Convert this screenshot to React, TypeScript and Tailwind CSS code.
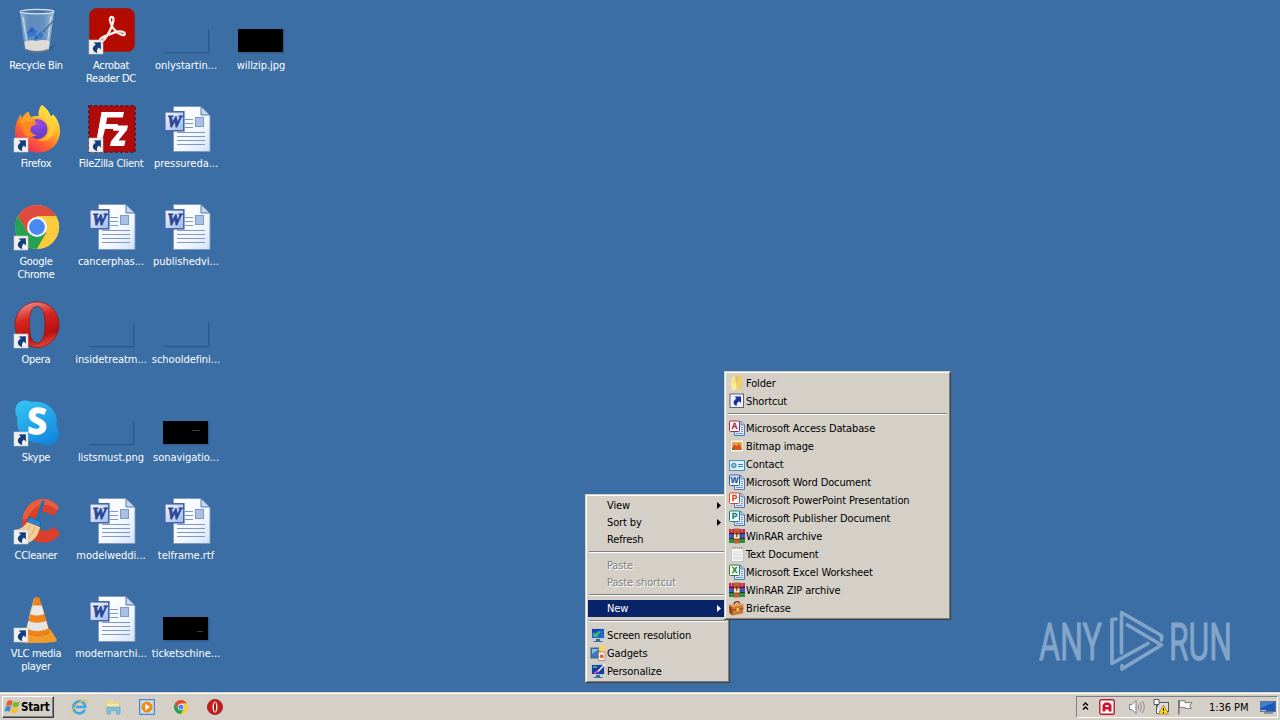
import type { ReactNode } from "react";
import clsx from "clsx";

// Small arrow badge in the bottom-left corner of shortcuts
function ShortcutBadge() {
  return (
    <g>
      <rect x="2" y="33" width="14" height="14" fill="#f1f0ee" stroke="#c9c6c2" strokeWidth="0.6" />
      <path d="M6.6 35.6L13.8 35.2L14 42.4L11.8 40.4C10 42 9.6 43.6 10.3 46.2C6 45 3.6 41 8.8 37.6Z" fill="#123f7c" />
    </g>
  );
}

function Icon48({ children, shortcut = false }: { children: ReactNode; shortcut?: boolean }) {
  return (
    <svg width="49" height="49" viewBox="0 0 49 49" className="block overflow-visible" aria-hidden>
      {children}
      {shortcut && <ShortcutBadge />}
    </svg>
  );
}

function RecycleBin() {
  return (
    <Icon48>
      <defs>
        <linearGradient id="bin" x1="0" x2="1">
          <stop offset="0" stopColor="#a9c3dc" />
          <stop offset="0.25" stopColor="#6592c4" />
          <stop offset="0.7" stopColor="#7099c6" />
          <stop offset="1" stopColor="#c4d3e2" />
        </linearGradient>
      </defs>
      <path d="M34 42L44 36L39 46Z" fill="#2f5c91" opacity="0.6" />
      <path d="M8 5L13 43Q25 47 37 43L42 5Q25 1 8 5Z" fill="url(#bin)" opacity="0.8" />
      <path d="M12.3 35Q18 32 24 34Q31 32 37.8 34.5L36.7 42Q25 46 13.6 42Z" fill="#dedbd4" />
      <path d="M13.4 42Q25 47 36.8 42L36.4 44.5Q25 48 13.8 44.5Z" fill="#5d7284" />
      <ellipse cx="25" cy="4.6" rx="17" ry="2.2" fill="#4a77aa" stroke="#dbe5ec" strokeWidth="1.2" />
      <path d="M20 20L25 24L23 29L17 30L15 26ZM25 28L29 24L31 29L28 32Z" fill="#3376cc" />
      <path d="M15 26L20 20L22 24ZM27 31L22 33L24 28Z" fill="#2560b4" />
      <path d="M11 10L15 35" stroke="#dce8f2" strokeWidth="1.6" opacity="0.65" />
      <path d="M39 9L35.5 36" stroke="#edf2f6" strokeWidth="1.2" opacity="0.7" />
      <path d="M31 25L41 14" stroke="#3f6492" strokeWidth="1.3" opacity="0.9" />
    </Icon48>
  );
}

function Acrobat() {
  return (
    <Icon48 shortcut>
      <rect x="2.5" y="1.5" width="45" height="43" rx="7" fill="#b30b00" stroke="#93160f" strokeWidth="0.6" />
      <path
        d="M13 33.5C12.5 30 20 28.7 27 25.6C33 23.4 38.5 24.6 37.8 27.2C36.5 30 29 25.6 25.8 20.6C22.8 15.5 21.6 10 24.7 9.8C27.8 9.9 26.3 16 24.1 21C20.7 28.7 15.6 36 13.5 34.4Z"
        fill="none"
        stroke="#f8eeec"
        strokeWidth="2.3"
      />
    </Icon48>
  );
}

function Firefox() {
  return (
    <Icon48 shortcut>
      <defs>
        <linearGradient id="fx" x1="0.8" y1="0.1" x2="0.25" y2="0.95">
          <stop offset="0" stopColor="#fff04a" />
          <stop offset="0.35" stopColor="#ffb22e" />
          <stop offset="0.65" stopColor="#ff6a2c" />
          <stop offset="1" stopColor="#f02a5c" />
        </linearGradient>
        <radialGradient id="fxGlobe" cx="0.5" cy="0.2" r="0.9">
          <stop offset="0" stopColor="#a04be0" />
          <stop offset="1" stopColor="#4b3cc4" />
        </radialGradient>
      </defs>
      <path
        d="M30 0C33 2 37 5.5 38.5 10.5C40.3 12 40.8 10 40.5 8.7C45 13 48 19 48 26C48 39 38.5 47.5 26 47.5C13 47.5 3 38.5 3 27C3 19 5.5 14.5 8.5 9.5C9.5 11.5 9.7 12.5 10.2 13.3C12.2 9.5 14.5 7.5 17 6.6C16.8 9 17.5 11 19 12.2C21 11 24.5 10.5 27 11.2C26 7 27.3 2.8 30 0Z"
        fill="url(#fx)"
      />
      <circle cx="25.5" cy="24" r="10" fill="url(#fxGlobe)" />
      <path d="M7 16C12 14.8 15 16.5 17.5 16.8L24.5 17.8C25 20.5 20 20 18.8 22.5C17.5 26 20 30 25 30C15 35 10 29 10.5 22Z" fill="#ff8a1f" />
      <path d="M10.2 13.3C12.2 9.5 14.5 7.5 17 6.6C16.8 9 17.5 11 19 12.2L24 17C18 18 13 16 8 18Z" fill="#ffa02a" />
      <path d="M27 11.2C34 13 37.5 18 37 25C36.5 31 31 35 26 35C31 38 42 34 42.5 24C42.5 17 38.5 10.5 30 0C27.3 2.8 26 7 27 11.2Z" fill="#ffd43a" opacity="0.75" />
    </Icon48>
  );
}

function FileZilla() {
  return (
    <Icon48 shortcut>
      <rect x="2" y="1" width="46" height="46" fill="#b00a0a" />
      <rect x="2" y="1" width="46" height="46" fill="none" stroke="#6f1522" strokeWidth="2" strokeDasharray="3 2.2" />
      <path d="M15 7H37L35.8 12.5H20.2L19 19H31L30 24H18L14.5 38H9Z" fill="#fff" />
      <path d="M27 20.5H41L40 25L31.5 35.5H38.5L37.3 41H23L24 36.2L32.5 25.7H26Z" fill="#fff" />
      <path d="M14.5 7H19L15 36H9.5Z" fill="#fff" />
    </Icon48>
  );
}

function ChromeArt() {
  return (
    <>
      <circle cx="25" cy="24" r="22" fill="#fbc934" />
      <path d="M5.9 13A22 22 0 0 1 44.1 13H25L15.5 29.5Z" fill="#df4b3c" />
      <path d="M5.9 13A22 22 0 0 0 25 46L34.5 29.5H15.5Z" fill="#25a153" />
      <path d="M25 13H44.1A22 22 0 0 1 25 46L34.5 29.5Z" fill="#fbcb3b" />
      <circle cx="25" cy="24" r="10" fill="#f5f6f7" />
      <circle cx="25" cy="24" r="7.9" fill="#4a88f2" />
    </>
  );
}

function OperaArt() {
  return (
    <>
      <defs>
        <linearGradient id="opera" x1="0.3" y1="0" x2="0.6" y2="1">
          <stop offset="0" stopColor="#ee8b86" />
          <stop offset="0.35" stopColor="#d8261f" />
          <stop offset="0.75" stopColor="#b8100f" />
          <stop offset="1" stopColor="#e2483f" />
        </linearGradient>
      </defs>
      <path
        fillRule="evenodd"
        d="M25 1C37.5 1 47 11 47 23.5S37.5 46.5 25 46.5S3 36 3 23.5S12.5 1 25 1ZM25 5.5C19.5 5.5 17.5 12 17.5 23.5S19.5 42 25 42S33 35 33 23.5S30.5 5.5 25 5.5Z"
        fill="url(#opera)"
        stroke="#8f1313"
        strokeWidth="0.7"
      />
    </>
  );
}

function Skype() {
  return (
    <Icon48 shortcut>
      <defs>
        <linearGradient id="skype" x1="0.2" y1="0" x2="0.7" y2="1">
          <stop offset="0" stopColor="#33c2f2" />
          <stop offset="1" stopColor="#1287e0" />
        </linearGradient>
      </defs>
      <path
        d="M4 8C6 1 14 0 19.5 3C32 1 43 8 44.5 20C45 22.5 44.8 25 44.5 27C50 35 46 44.5 38 45.5C33.5 46.5 30 45 28 43.5C16 45 6 36 5.3 25C5 22.5 5.2 20 5.6 18C3.2 15.5 3 11 4 8Z"
        fill="url(#skype)"
      />
      <text x="25" y="35" textAnchor="middle" fill="#fff" stroke="#fff" strokeWidth="1.4" className="font-['Open_Sans',sans-serif] text-[35px] font-bold">
        S
      </text>
    </Icon48>
  );
}

function CCleaner() {
  return (
    <Icon48 shortcut>
      <path d="M47 10.5L41.5 19C34 13 27 14.5 24 20C21 27 26 35 35 33.5C38 33 40 31 42 29.5L48 37C42 45 34 46.5 27 45C16 43 9 34 10.5 22C12 10 21 1.5 32 2C38 2 44 6 47 10.5Z" fill="#dc4029" />
      <path d="M10.5 22C12 10 21 1.5 32 2C38 2 44 6 47 10.5L45 13C36 5 21 6 15 22Z" fill="#ec6a4a" opacity="0.7" />
      <path d="M31 5L26 22" stroke="#1f6fb4" strokeWidth="3.2" strokeLinecap="round" />
      <path d="M17 20L29 24.5L27.5 30L15 25Z" fill="#2b83cc" stroke="#155a97" strokeWidth="0.8" />
      <path d="M15 25L28 30C27 37 23 43 16 46L3 33C9 32 13 29 15 25Z" fill="#f3cf97" />
      <path d="M18 28C16 34 13 37 9 39M23 30C21 36 18 40 14 43" stroke="#dba865" strokeWidth="1" fill="none" />
    </Icon48>
  );
}

function Vlc() {
  return (
    <Icon48 shortcut>
      <path d="M11 35L38 35L45 45.5Q26 50 5 46.5Z" fill="#ef8a18" />
      <path d="M12 35L38 34L45 45L43 47Q26 49 8 47Z" fill="#f39a2a" />
      <path d="M14 38Q26 44 37.5 38L36 33H16Z" fill="#c9610b" />
      <path d="M22.5 3Q25 0.8 27.5 3L38 37Q26 44 13.5 37Z" fill="#f0821a" />
      <path d="M20.3 10.5H29.8L32.3 19Q25 22 17.8 19Z" fill="#e9e9e8" />
      <path d="M16.2 26Q25 29.5 34.2 26L36.3 33.5Q25.5 38.5 14.5 33.5Z" fill="#e3e4e4" />
      <path d="M22.5 3L17 24" stroke="#ffc078" strokeWidth="1.2" opacity="0.6" />
    </Icon48>
  );
}

function WordFile() {
  return (
    <Icon48>
      <defs>
        <linearGradient id="page" x1="0" y1="0" x2="1" y2="1">
          <stop offset="0" stopColor="#ffffff" />
          <stop offset="0.6" stopColor="#f4f8fe" />
          <stop offset="1" stopColor="#d3e2f8" />
        </linearGradient>
        <linearGradient id="wbox" x1="0" y1="0" x2="1" y2="1">
          <stop offset="0" stopColor="#f4f8fe" />
          <stop offset="1" stopColor="#9dbae8" />
        </linearGradient>
      </defs>
      <path d="M11.5 1.5H39L48 10V46.5H11.5Z" fill="url(#page)" stroke="#7d97c0" strokeWidth="0.9" />
      <path d="M39 1.5V10H48Z" fill="#c5d8f3" stroke="#456aa6" strokeWidth="0.9" />
      <g stroke="#8098c4" strokeWidth="1">
        <path d="M23 14.5H31M23 18.5H31M23 22.5H31M15 27.5H43M15 31.5H43M15 35.5H43M15 39.5H43" />
      </g>
      <rect x="33.5" y="12.5" width="8" height="9" fill="#a9c0e4" stroke="#7b99cb" />
      <rect x="2.8" y="6.8" width="19" height="19" fill="url(#wbox)" stroke="#4567ac" strokeWidth="1.6" />
      <text x="12.2" y="22" textAnchor="middle" fill="#2b4795" stroke="#2b4795" strokeWidth="0.9" className="font-['Liberation_Serif',serif] text-[16px] font-bold italic">
        W
      </text>
    </Icon48>
  );
}

// Image thumbnails: transparent ones only show their shadow
function Thumb({ dark = false, mark }: { dark?: boolean; mark?: string }) {
  return (
    <Icon48>
      {dark ? (
        <>
          <rect x="2" y="23" width="45.5" height="23.5" fill="#27517f" opacity="0.6" />
          <rect x="1" y="22" width="45" height="23" fill="#000" />
        </>
      ) : (
        <>
          <path d="M46.5 22V45.5H2" fill="none" stroke="#2a588b" strokeWidth="1" />
          <path d="M47.5 23V46.5H4" fill="none" stroke="#31659b" strokeWidth="1" opacity="0.8" />
        </>
      )}
      {mark && <path d={mark} stroke="#3d3d3d" strokeWidth="1" />}
    </Icon48>
  );
}

interface DesktopItem {
  label: string;
  icon: ReactNode;
}

const DESKTOP: DesktopItem[] = [
  { label: "Recycle Bin", icon: <RecycleBin /> },
  { label: "Firefox", icon: <Firefox /> },
  { label: "Google\nChrome", icon: <Icon48 shortcut><ChromeArt /></Icon48> },
  { label: "Opera", icon: <Icon48 shortcut><OperaArt /></Icon48> },
  { label: "Skype", icon: <Skype /> },
  { label: "CCleaner", icon: <CCleaner /> },
  { label: "VLC media\nplayer", icon: <Vlc /> },
  { label: "Acrobat\nReader DC", icon: <Acrobat /> },
  { label: "FileZilla Client", icon: <FileZilla /> },
  { label: "cancerphas...", icon: <WordFile /> },
  { label: "insidetreatm...", icon: <Thumb /> },
  { label: "listsmust.png", icon: <Thumb /> },
  { label: "modelweddi...", icon: <WordFile /> },
  { label: "modernarchi...", icon: <WordFile /> },
  { label: "onlystartin...", icon: <Thumb /> },
  { label: "pressureda...", icon: <WordFile /> },
  { label: "publishedvi...", icon: <WordFile /> },
  { label: "schooldefini...", icon: <Thumb /> },
  { label: "sonavigatio...", icon: <Thumb dark mark="M30 31.5H38" /> },
  { label: "telframe.rtf", icon: <WordFile /> },
  { label: "ticketschine...", icon: <Thumb dark mark="M35 36.5H41" /> },
  { label: "willzip.jpg", icon: <Thumb dark /> },
];

function Icon16({ children }: { children: ReactNode }) {
  return (
    <svg width="16" height="16" viewBox="0 0 16 16" className="block shrink-0 overflow-visible" aria-hidden>
      {children}
    </svg>
  );
}

function OfficeIcon({ letter, color }: { letter: string; color: string }) {
  return (
    <Icon16>
      <path d="M5.5 1.5H12L15.5 5V15.5H5.5Z" fill="#dce9f9" stroke="#4a78b5" />
      <path d="M12 1.5V5H15.5" fill="#b9d0ee" stroke="#4a78b5" strokeWidth="0.8" />
      <path d="M12 7.5H14M12 9.5H14M12 11.5H14M7 13.5H14" stroke="#6f9bd0" />
      <rect x="0.5" y="1" width="10" height="10.5" rx="1" fill="#fff" stroke={color} />
      <text x="5.5" y="9.3" textAnchor="middle" fill={color} stroke={color} strokeWidth="0.3" className="font-['Liberation_Sans',sans-serif] text-[8.5px] font-bold tracking-normal">
        {letter}
      </text>
    </Icon16>
  );
}

function RarIcon() {
  return (
    <Icon16>
      <rect x="0" y="1" width="16" height="5" fill="#c0284f" />
      <rect x="0" y="6" width="16" height="4.5" fill="#4355c4" />
      <rect x="0" y="10.5" width="16" height="4.5" fill="#23913f" />
      <path d="M0 5.5H16M0 10.5H16" stroke="#2b1030" strokeWidth="0.8" />
      <rect x="5" y="0.5" width="5.5" height="15" fill="#c0622f" />
      <rect x="4.5" y="6" width="6.5" height="5" fill="#f4e7c5" stroke="#5d2a12" strokeWidth="0.7" />
      <path d="M7.8 4V9" stroke="#4d2510" />
      <path d="M2.5 1V4M13 1V4" stroke="#e5839c" />
    </Icon16>
  );
}

const NEW_ITEMS: { label: string; icon: ReactNode }[] = [
  {
    label: "Microsoft Access Database",
    icon: <OfficeIcon letter="A" color="#a4274f" />,
  },
  {
    label: "Bitmap image",
    icon: (
      <Icon16>
        <rect x="1.5" y="2" width="13" height="12" fill="#fbf8f0" stroke="#d4c9b4" />
        <rect x="3" y="4" width="10" height="8" fill="#f0a645" />
        <path d="M3 12L5 6L8 8L10 5L13 12Z" fill="#d05526" />
        <path d="M3 12V9L6 12Z" fill="#4c7a2c" />
      </Icon16>
    ),
  },
  {
    label: "Contact",
    icon: (
      <Icon16>
        <rect x="0.5" y="4.5" width="15" height="10" fill="#dcf1fb" stroke="#3f95c4" />
        <circle cx="4.8" cy="9.5" r="2.3" fill="#8bbad3" stroke="#31728f" strokeWidth="0.8" />
        <path d="M9 8.5H14M9 10.5H14" stroke="#2c8fc6" />
      </Icon16>
    ),
  },
  { label: "Microsoft Word Document", icon: <OfficeIcon letter="W" color="#2a5ba8" /> },
  { label: "Microsoft PowerPoint Presentation", icon: <OfficeIcon letter="P" color="#d1482a" /> },
  { label: "Microsoft Publisher Document", icon: <OfficeIcon letter="P" color="#11807e" /> },
  { label: "WinRAR archive", icon: <RarIcon /> },
  {
    label: "Text Document",
    icon: (
      <Icon16>
        <path d="M2.5 2H14V15.5H2.5Z" fill="#f7f8f6" stroke="#b9bdb9" strokeWidth="0.8" />
        <path d="M4 0.8V3M6.2 0.8V3M8.4 0.8V3M10.6 0.8V3M12.6 0.8V3" stroke="#8e9490" strokeWidth="0.9" />
        <path d="M4 6H12.5M4 8.5H12.5M4 11H12.5M4 13H12.5" stroke="#c9d2d6" />
      </Icon16>
    ),
  },
  { label: "Microsoft Excel Worksheet", icon: <OfficeIcon letter="X" color="#1f8038" /> },
  { label: "WinRAR ZIP archive", icon: <RarIcon /> },
  {
    label: "Briefcase",
    icon: (
      <Icon16>
        <path d="M5 4.5C5 1 10.5 0.5 10.5 3.5" fill="none" stroke="#6d3a14" strokeWidth="1.3" />
        <path d="M0 5L12.5 3L14.5 5L14 13.5L3.5 15.5L0.5 13Z" fill="#cf7832" />
        <path d="M0 5L3 7.2L14.5 5L12.5 3Z" fill="#e9a25e" />
        <path d="M0 5L3 7.2L3.5 15.5L0.5 13Z" fill="#8f4714" />
        <path d="M3.2 10.3L14.2 8.7" stroke="#8f4714" />
        <rect x="7.6" y="8.3" width="2.4" height="2.6" fill="#f6d98a" />
      </Icon16>
    ),
  },
];

const menuFrame =
  "absolute border border-t-[#d4d0c8] border-l-[#d4d0c8] border-r-[#404040] border-b-[#404040] bg-[#d4d0c8]";
const menuInner =
  "border border-t-white border-l-white border-r-[#808080] border-b-[#808080] p-px";

function Separator() {
  return <div className="mx-px mt-[3px] mb-1 h-[2px] border-t border-b border-t-[#808080] border-b-white" />;
}

function MenuRow({
  label,
  icon,
  arrow = false,
  disabled = false,
  active = false,
  tall = false,
}: {
  label: string;
  icon?: ReactNode;
  arrow?: boolean;
  disabled?: boolean;
  active?: boolean;
  tall?: boolean;
}) {
  return (
    <div
      className={clsx(
        "flex items-center pr-[6px]",
        tall ? "h-[18px]" : "h-[17px]",
        active && "bg-[#0a246a] text-white",
        disabled && "text-[#808080] [text-shadow:1px_1px_0_#fff]",
      )}
    >
      <div className="flex w-[19px] shrink-0 pl-[2px]">{icon}</div>
      <span className="flex-1 tracking-[-0.13px]">{label}</span>
      {arrow && (
        <svg width="4" height="7" viewBox="0 0 4 7" className="mb-px block" aria-hidden>
          <path d="M0 0L4 3.5L0 7Z" fill="currentColor" />
        </svg>
      )}
    </div>
  );
}

function MonitorArt({ brush = false }: { brush?: boolean }) {
  return (
    <Icon16>
      <rect x="1.5" y="1.5" width="13" height="10" fill="#1c3fae" stroke="#b9c8da" />
      <path d="M2 11V6L14 2V11Z" fill={brush ? "#143a9c" : "#2263cc"} />
      <path d="M6 12H10V14H12.5V15H3.5V14H6Z" fill="#3b67a8" />
      {brush ? (
        <>
          <path d="M7.5 9L15 1" stroke="#f4f4f8" strokeWidth="1.6" />
          <path d="M4 10.5L8 8" stroke="#d04bd0" strokeWidth="1.8" />
          <path d="M3 4H7" stroke="#4ec46a" strokeWidth="1.5" />
        </>
      ) : (
        <path d="M3.5 10V5.5L5.2 7L9 4L11 5L7 8.7L8.5 10Z" fill="#45c065" />
      )}
    </Icon16>
  );
}

function ContextMenu() {
  return (
    <div className={clsx(menuFrame, "left-[585px] top-[494px] w-[145px]")}>
      <div className={menuInner}>
        <MenuRow label="View" arrow />
        <MenuRow label="Sort by" arrow />
        <MenuRow label="Refresh" />
        <Separator />
        <MenuRow label="Paste" disabled />
        <MenuRow label="Paste shortcut" disabled />
        <Separator />
        <MenuRow label="New" arrow active />
        <Separator />
        <MenuRow tall label="Screen resolution" icon={<MonitorArt />} />
        <MenuRow
          tall
          label="Gadgets"
          icon={
            <Icon16>
              <rect x="1" y="3" width="9" height="10" fill="#3f78b8" stroke="#24527f" strokeWidth="0.8" />
              <path d="M2 4H9L2 9Z" fill="#8fb9de" />
              <rect x="9" y="0.5" width="6" height="6" rx="1" fill="#f3d75b" />
              <rect x="8.5" y="7" width="6.5" height="8.5" fill="#fbfbfb" stroke="#b57c5a" strokeWidth="0.8" />
              <circle cx="11.7" cy="11.2" r="2" fill="#d96b3a" />
            </Icon16>
          }
        />
        <MenuRow tall label="Personalize" icon={<MonitorArt brush />} />
      </div>
    </div>
  );
}

function NewSubmenu() {
  return (
    <div className={clsx(menuFrame, "left-[724px] top-[371px] w-[227px]")}>
      <div className={menuInner}>
        <MenuRow
          tall
          label="Folder"
          icon={
            <Icon16>
              <path d="M2 2L7 1V14L2 15Z" fill="#f5e08a" />
              <path d="M6 1H13V14L7 15.5Z" fill="#ebcf68" />
              <path d="M2 8L9 7V15L3 15.5Z" fill="#f9ea9f" />
              <path d="M8 1.5V14.5" stroke="#d3b14a" strokeWidth="0.8" />
            </Icon16>
          }
        />
        <MenuRow
          tall
          label="Shortcut"
          icon={
            <Icon16>
              <rect x="1" y="1" width="13.5" height="13.5" fill="#eff2fb" stroke="#5a6474" />
              <path d="M5.5 3.5H12V10L10.1 8.2C8.1 9.4 7.5 10.8 7.7 13C4.2 12 3.1 8.4 7.5 5.5Z" fill="#1d2f9c" />
            </Icon16>
          }
        />
        <Separator />
        {NEW_ITEMS.map((item) => (
          <MenuRow key={item.label} tall label={item.label} icon={item.icon} />
        ))}
      </div>
    </div>
  );
}

function Watermark() {
  return (
    <svg width="210" height="70" viewBox="0 0 210 70" className="absolute left-[1035px] top-[606px] overflow-visible opacity-60" aria-hidden>
      <g fill="#b6cbe3" stroke="#b6cbe3" strokeWidth="0.9" className="font-['Roboto',sans-serif] text-[51px] tracking-normal">
        <text x="4" y="53.5" textLength="63" lengthAdjust="spacingAndGlyphs">ANY</text>
        <text x="134" y="53.5" textLength="63" lengthAdjust="spacingAndGlyphs">RUN</text>
      </g>
      <g fill="none" stroke="#b6cbe3" strokeWidth="3.6" strokeLinejoin="round" strokeLinecap="round">
        <path d="M86.5 47V6.5L126.5 29.5V34" />
        <path d="M92.5 19L126.5 39L87 63V59.5" />
        <path d="M81 13L77 13.5V57.5L113 37.5" />
      </g>
    </svg>
  );
}

function StartButton() {
  return (
    <button className="flex h-[22px] w-[52px] items-center border border-t-white border-l-white border-r-[#404040] border-b-[#404040] pl-px shadow-[inset_-1px_-1px_0_#808080]">
      <svg width="17" height="16" viewBox="0 0 17 16" className="block shrink-0" aria-hidden>
        <path d="M3.5 2C5.5 0.8 7 1 8.6 2L7.3 7C5.6 6 4 6 2 7Z" fill="#e5582b" />
        <path d="M9.4 2.4C11.5 3.5 13.5 3.5 15.8 2.2L14.5 7.2C12.3 8.4 10.4 8.4 8.2 7.4Z" fill="#7bb93c" />
        <path d="M1.8 7.8C3.8 6.8 5.4 6.9 7 7.8L5.7 12.8C4.2 11.8 2.5 11.8 0.5 12.8Z" fill="#3f8ad0" />
        <path d="M8 8.3C10 9.3 12 9.3 14.3 8.1L13 13.1C10.8 14.3 8.8 14.2 6.7 13.2Z" fill="#f6c02c" />
      </svg>
      <span className="font-['DejaVu_Sans_Condensed','DejaVu_Sans',sans-serif] text-[11.5px] font-bold tracking-[-0.2px]">Start</span>
    </button>
  );
}

function QuickLaunch() {
  return (
    <div className="ml-[17px] flex items-center gap-[18px]">
      <Icon16>
        <path d="M13.8 10.8A6 6 0 1 1 14.3 8H4.5" fill="none" stroke="#3ea6e0" strokeWidth="2.6" />
        <path d="M1.2 14.5C-0.8 11 8 2 14.5 1.2C17 1.2 15.5 4 15 5" fill="none" stroke="#e8c14a" strokeWidth="1.2" />
      </Icon16>
      <Icon16>
        <path d="M1 3L3 1.5H7L8 3H14V8H1Z" fill="#f4dd86" />
        <rect x="1" y="4" width="13.5" height="8" fill="#f6e7a4" stroke="#d8bd60" strokeWidth="0.6" />
        <path d="M2 8H15V15H11.5V11.5H5.5V15H2Z" fill="#7ebfdf" stroke="#4f9ac4" strokeWidth="0.6" />
      </Icon16>
      <Icon16>
        <rect x="0.5" y="0.5" width="15" height="15" fill="#aacbe8" stroke="#4e86bd" />
        <rect x="2.5" y="2.5" width="11" height="11" fill="#dcebf7" />
        <circle cx="8" cy="8" r="5.6" fill="#f08a1c" />
        <path d="M6.3 4.8V11.2L11 8Z" fill="#fff" />
      </Icon16>
      <svg width="16" height="16" viewBox="0 -1 50 50" className="block" aria-hidden>
        <ChromeArt />
      </svg>
      <Icon16>
        <circle cx="8" cy="8" r="7.6" fill="#c81c1c" stroke="#8d1212" strokeWidth="0.7" />
        <ellipse cx="8" cy="8" rx="2.5" ry="5.5" fill="#f8ecec" />
        <ellipse cx="8" cy="8" rx="1" ry="4.8" fill="#a01313" />
      </Icon16>
    </div>
  );
}

function Tray() {
  return (
    <div className="mr-[2px] ml-auto flex h-[22px] w-[202px] items-center border border-t-[#808080] border-l-[#808080] border-r-white border-b-white">
      <svg width="7" height="8" viewBox="0 0 7 8" className="mb-[3px] ml-[5px] block" aria-hidden>
        <path d="M1 3.5L3.5 1L6 3.5M1 7.5L3.5 5L6 7.5" fill="none" stroke="#000" strokeWidth="1.3" />
      </svg>
      <div className="ml-[10px]">
        <Icon16>
          <rect x="0.8" y="0.8" width="14.4" height="14.4" rx="1.5" fill="#fff" stroke="#c9142b" strokeWidth="1.4" />
          <path d="M3.5 12.5V6L6 3.5H10L12.5 6V12.5H9.6V10.4H6.4V12.5ZM6.4 8H9.6V6.2H6.4Z" fill="#c9142b" fillRule="evenodd" />
        </Icon16>
      </div>
      <div className="ml-[14px] flex gap-2">
        <Icon16>
          <path d="M0.5 5.5H3L7 1.5V14.5L3 10.5H0.5Z" fill="#fafafa" stroke="#77777a" strokeWidth="0.9" />
          <path d="M9 5.5Q10.5 8 9 10.5M11 3.5Q14 8 11 12.5M13.2 2Q17.5 8 13.2 14" fill="none" stroke="#808488" strokeWidth="0.9" />
        </Icon16>
        <Icon16>
          <rect x="4.5" y="3.5" width="11" height="9" fill="#d8dde0" stroke="#55595d" />
          <path d="M1 0.5H6V5.5H1ZM3.5 5.5V14.5H7" fill="#fafafa" stroke="#4a4d50" strokeWidth="0.9" />
          <path d="M10.5 6L15.5 15H5.5Z" fill="#ffd42a" stroke="#9a7a0a" strokeWidth="0.7" />
          <path d="M10.5 9V12M10.5 13V14.2" stroke="#000" />
        </Icon16>
        <Icon16>
          <path d="M1.8 1V15.5" stroke="#77797c" strokeWidth="1.6" />
          <path d="M2.5 1.8H8V3.6H15L12.8 6.4L14.6 9.4H8V8.4H2.5Z" fill="#fbfbfb" stroke="#6d7073" strokeWidth="0.9" />
        </Icon16>
      </div>
      <span className="ml-4 whitespace-nowrap tracking-[-0.05px]">1:36 PM</span>
      <div className="mr-[1px] ml-auto">
        <Icon16>
          <rect x="0.5" y="2.5" width="15" height="10" fill="#1d58b8" stroke="#5b7390" />
          <path d="M1 3H15L1 9Z" fill="#4380d4" />
          <path d="M1 11.5H6" stroke="#b9d3f0" />
          <path d="M4 14H13" stroke="#6a7682" strokeWidth="1.4" />
        </Icon16>
      </div>
    </div>
  );
}

export default function App() {
  return (
    <div className="flex h-screen w-full cursor-default flex-col overflow-hidden bg-[#3a6ea5] font-['DejaVu_Sans_Condensed','DejaVu_Sans',sans-serif] text-[11px] leading-[13px] tracking-[-0.3px] text-black select-none">
      <main className="relative min-h-0 flex-1 pt-[7px]">
        <div className="ml-[-1.5px] grid w-[300px] grid-flow-col grid-cols-4 grid-rows-7">
          {DESKTOP.map((item) => (
            <div key={item.label} className="flex h-[98px] flex-col items-center">
              <div className="pl-[1px]">{item.icon}</div>
              <span
                className={clsx(
                  "mt-[3px] text-center whitespace-pre-line text-white",
                  item.label.includes(".") && "tracking-[-0.03px]",
                )}
              >
                {item.label}
              </span>
            </div>
          ))}
        </div>
        <Watermark />
        <ContextMenu />
        <NewSubmenu />
      </main>
      <footer className="flex h-7 shrink-0 items-center border-t border-t-[#d4d0c8] bg-[#d4d0c8] pt-px pl-[2px] shadow-[inset_0_1px_0_#fff]">
        <StartButton />
        <QuickLaunch />
        <Tray />
      </footer>
    </div>
  );
}
